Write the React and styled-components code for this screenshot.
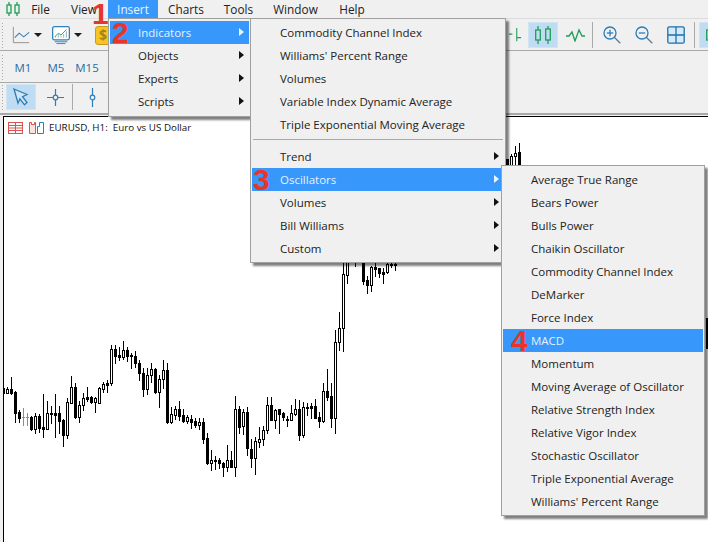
import React from "react";
import styled, { createGlobalStyle } from "styled-components";

const GlobalStyle = createGlobalStyle`
  html, body {
    margin: 0;
    padding: 0;
    height: 100%;
    overflow: hidden;
    background: #f0f0f0;
  }
`;

const GREEN = "#1f9d55";
const BLUE = "#2f7fb8";
const HIGHLIGHT = "#3797fb";

// hi, lo, body top, body bottom, kind (f = filled, h = hollow, g = grey doji)
const candles = [
  [3, 387, 393, 388, 393, "f"], [7, 387, 393, 389, 393, "h"], [11, 377, 394, 389, 393, "f"],
  [15, 391, 422, 392, 413, "f"], [19, 410, 422, 412, 418, "f"], [23, 408, 425, 417, 418, "g"],
  [27, 413, 425, 417, 418, "g"], [31, 416, 430, 417, 429, "f"], [35, 413, 433, 416, 429, "h"],
  [39, 414, 432, 416, 428, "f"], [43, 394, 437, 427, 429, "f"], [47, 401, 429, 413, 429, "h"],
  [51, 406, 423, 413, 414, "f"], [55, 394, 437, 413, 415, "f"], [59, 406, 433, 413, 421, "f"],
  [63, 419, 446, 420, 435, "f"], [67, 398, 438, 402, 435, "h"], [71, 376, 403, 387, 403, "h"],
  [75, 383, 418, 387, 417, "f"], [79, 401, 422, 405, 417, "h"], [83, 393, 410, 398, 405, "h"],
  [87, 387, 401, 397, 399, "f"], [91, 396, 403, 397, 402, "f"], [95, 397, 412, 398, 402, "h"],
  [99, 387, 403, 388, 403, "h"], [103, 382, 392, 384, 389, "h"], [107, 380, 392, 383, 385, "f"],
  [111, 345, 385, 349, 383, "h"], [115, 345, 363, 349, 356, "f"], [119, 347, 360, 355, 357, "f"],
  [123, 341, 359, 350, 357, "h"], [127, 347, 361, 350, 356, "f"], [131, 353, 368, 355, 356, "f"],
  [135, 351, 367, 356, 363, "f"], [139, 360, 380, 363, 373, "f"], [143, 368, 396, 373, 389, "f"],
  [147, 368, 394, 375, 389, "h"], [151, 363, 382, 369, 375, "h"], [155, 368, 393, 369, 392, "f"],
  [159, 375, 407, 379, 392, "h"], [163, 360, 388, 370, 379, "h"], [167, 363, 423, 370, 422, "f"],
  [171, 407, 423, 414, 422, "h"], [175, 406, 419, 409, 415, "h"], [179, 401, 420, 409, 416, "f"],
  [183, 409, 422, 415, 421, "f"], [187, 415, 423, 417, 421, "h"], [191, 415, 428, 419, 422, "f"],
  [195, 418, 427, 421, 425, "f"], [199, 418, 429, 422, 425, "h"], [203, 418, 443, 422, 439, "f"],
  [207, 433, 464, 438, 463, "f"], [211, 450, 470, 460, 463, "h"], [215, 456, 469, 460, 461, "f"],
  [219, 458, 468, 460, 463, "f"], [223, 462, 476, 463, 467, "f"], [227, 445, 471, 460, 467, "h"],
  [231, 451, 467, 460, 467, "f"], [235, 396, 476, 409, 467, "h"], [239, 406, 433, 409, 427, "f"],
  [243, 409, 434, 412, 426, "h"], [247, 407, 455, 412, 448, "f"], [251, 439, 467, 449, 458, "f"],
  [255, 437, 474, 441, 458, "h"], [259, 427, 447, 439, 442, "h"], [263, 426, 445, 430, 439, "h"],
  [267, 397, 433, 405, 430, "h"], [271, 397, 420, 405, 420, "f"], [275, 409, 428, 410, 420, "h"],
  [279, 409, 433, 409, 414, "f"], [283, 412, 420, 413, 417, "f"], [287, 416, 426, 419, 420, "f"],
  [291, 405, 420, 413, 420, "h"], [295, 399, 415, 409, 414, "h"], [299, 400, 440, 409, 435, "f"],
  [303, 402, 437, 407, 435, "h"], [307, 403, 415, 407, 408, "f"], [311, 403, 418, 406, 408, "f"],
  [315, 399, 418, 406, 418, "f"], [319, 412, 427, 417, 421, "f"], [323, 383, 422, 391, 421, "h"],
  [327, 369, 400, 391, 397, "f"], [331, 383, 427, 396, 418, "f"], [335, 330, 433, 342, 418, "h"],
  [339, 312, 350, 328, 342, "h"], [343, 255, 351, 274, 328, "h"], [347, 255, 283, 255, 275, "h"],
  [355, 250, 266, 258, 260, "f"], [363, 250, 284, 255, 281, "f"], [367, 276, 293, 280, 285, "f"],
  [371, 266, 291, 267, 285, "h"], [375, 255, 276, 267, 269, "f"], [379, 268, 277, 268, 273, "f"],
  [383, 268, 283, 272, 274, "f"], [387, 255, 273, 264, 272, "h"], [391, 255, 267, 264, 265, "f"],
  [395, 255, 270, 264, 265, "f"], [507, 159, 170, 159, 170, "f"], [511, 154, 170, 156, 170, "h"],
  [515, 146, 170, 153, 156, "h"], [519, 143, 170, 152, 170, "f"], [707, 318, 348, 318, 348, "f"],
];

const indicatorsTop = [
  "Commodity Channel Index",
  "Williams' Percent Range",
  "Volumes",
  "Variable Index Dynamic Average",
  "Triple Exponential Moving Average",
];

const indicatorGroups = ["Trend", "Oscillators", "Volumes", "Bill Williams", "Custom"];

const oscillators = [
  "Average True Range",
  "Bears Power",
  "Bulls Power",
  "Chaikin Oscillator",
  "Commodity Channel Index",
  "DeMarker",
  "Force Index",
  "MACD",
  "Momentum",
  "Moving Average of Oscillator",
  "Relative Strength Index",
  "Relative Vigor Index",
  "Stochastic Oscillator",
  "Triple Exponential Average",
  "Williams' Percent Range",
];

const Page = styled.div`
  position: relative;
  width: 708px;
  height: 542px;
  overflow: hidden;
  display: flex;
  flex-direction: column;
  background: #f0f0f0;
  font-family: "Open Sans", "Noto Sans", sans-serif;
  font-size: 11.5px;
  color: #222;
`;

const MenuBar = styled.div`
  display: flex;
  align-items: stretch;
  height: 18px;
  padding-left: 4px;
  border-bottom: 1px solid #dcdcdc;
  font-size: 11.8px;
`;

const BarItem = styled.div`
  display: flex;
  align-items: center;
  width: ${(p) => p.$w}px;
  justify-content: center;
  background: ${(p) => (p.$active ? HIGHLIGHT : "transparent")};
  color: ${(p) => (p.$active ? "#eaf4ff" : "#222")};
`;

const ToolRow = styled.div`
  display: flex;
  align-items: center;
  height: 32px;
  overflow: hidden;
  border-bottom: 1px solid ${(p) => (p.$line ? "#a9a9a9" : "transparent")};
  width: ${(p) => p.$width || 708}px;
  padding: 1px 0 0 1px;
  box-sizing: border-box;
`;

const BottomRow = styled(ToolRow)`
  height: 30px;
  padding: 0 0 2px 1px;
  border-bottom: 0;
`;

const Grip = styled.div`
  width: 3px;
  height: 26px;
  margin-right: ${(p) => p.$mr}px;
  flex-shrink: 0;
  background-image: radial-gradient(circle, #a8a8a8 0.8px, transparent 1px);
  background-size: 3px 3px;
`;

const Tool = styled.div`
  display: flex;
  align-items: center;
  justify-content: center;
  flex-shrink: 0;
  box-sizing: border-box;
  width: ${(p) => p.$w}px;
  height: 26px;
  margin-left: ${(p) => p.$ml || 0}px;
  background: ${(p) => (p.$active ? "#bfdcf3" : "transparent")};
  border: 1px solid ${(p) => (p.$active ? "#cfe4f5" : "transparent")};
`;

const Caret = styled.div`
  width: 14px;
  flex-shrink: 0;
  display: flex;
  justify-content: center;

  &::before {
    content: "";
    border-left: 4px solid transparent;
    border-right: 4px solid transparent;
    border-top: 4px solid #1c1c1c;
  }
`;

const Dollar = styled.div`
  width: 16px;
  height: 19px;
  margin-left: ${(p) => p.$ml}px;
  flex-shrink: 0;
  box-sizing: border-box;
  border: 1px solid #c79a1c;
  border-radius: 3px;
  background: #f6c523;
  color: #a3831c;
  font-weight: 700;
  font-size: 14px;
  line-height: 16px;
  text-align: center;
`;

const RightTools = styled.div`
  display: flex;
  align-items: center;
  margin-left: auto;
  margin-right: -21px;
`;

const ToolSep = styled.div`
  width: 1px;
  height: 26px;
  flex-shrink: 0;
  margin-left: ${(p) => p.$ml || 0}px;
  margin-right: ${(p) => p.$mr || 0}px;
  background: #a9a9a9;
`;

const Timeframe = styled.div`
  width: ${(p) => p.$w}px;
  margin-left: ${(p) => p.$ml}px;
  flex-shrink: 0;
  text-align: center;
  color: #2a6ca3;
`;

const ChartPanel = styled.div`
  position: relative;
  flex: 1;
  min-height: 0;
  border-top: 2px solid #a9a9a9;
  background: #f0f0f0;
`;

const ChartFrame = styled.div`
  position: absolute;
  inset: 1px 0 0 3px;
  border-top: 1px solid #000;
  border-left: 1px solid #000;
  background: #fff;
  overflow: hidden;
`;

const ChartSvg = styled.svg`
  display: block;
  width: 704px;
  height: 425px;
`;

const Legend = styled.div`
  position: absolute;
  top: 4px;
  left: 4px;
  display: flex;
  align-items: center;
  gap: 6px;
  font-size: 9.8px;
  line-height: 14px;
  color: #111;
  white-space: pre;
`;

const LegendTitle = styled.span`
  margin-left: -1px;
`;

const Menu = styled.div`
  position: absolute;
  top: ${(p) => p.$top}px;
  left: ${(p) => p.$left}px;
  width: ${(p) => p.$w}px;
  box-sizing: border-box;
  padding: 2px 1px;
  background: #f0f0f0;
  border: 1px solid #a0a0a0;
  box-shadow: 3px 3px 2px rgba(0, 0, 0, 0.5);
`;

const InsertMenu = styled(Menu)`
  padding-bottom: 3px;
`;

const Item = styled.div`
  position: relative;
  height: 23px;
  line-height: 23px;
  padding-left: 28px;
  white-space: nowrap;
  background: ${(p) => (p.$active ? HIGHLIGHT : "transparent")};
  color: ${(p) => (p.$active ? "#e6f2ff" : "#222")};

  ${(p) =>
    p.$sub &&
    `
    &::after {
      content: "";
      position: absolute;
      right: 5px;
      top: 7px;
      border-top: 4px solid transparent;
      border-bottom: 4px solid transparent;
      border-left: 5px solid ${p.$active ? "#eaf4ff" : "#111"};
    }
  `}
`;

const Separator = styled.div`
  height: 1px;
  margin: 3px 1px 5px;
  background: #a8a8a8;
`;

const Step = styled.span`
  position: absolute;
  left: ${(p) => p.$left}px;
  top: ${(p) => p.$top}px;
  font-family: "Liberation Sans", Arial, sans-serif;
  font-weight: 700;
  font-size: 30px;
  line-height: 23px;
  color: #e8352a;
`;

const Logo = () => (
  <svg width="16" height="16" viewBox="0 0 16 16" fill="none" stroke={GREEN} strokeWidth="1.3">
    <path d="M4 1v3M4 12v3M12 1v3M12 12v3" />
    <rect x="2" y="4" width="4" height="8" />
    <rect x="10" y="4" width="4" height="8" fill="#f0f0f0" />
  </svg>
);

const LineChartIcon = () => (
  <svg width="20" height="20" viewBox="0 0 20 20" fill="none">
    <path d="M1.5 1v17.5H19" stroke="#8a8a8a" />
    <path d="M3 13l5-5 5 4 6-5" stroke="#3b7fb0" strokeWidth="1.2" />
  </svg>
);

const ChartWindowIcon = () => (
  <svg width="20" height="20" viewBox="0 0 20 20" fill="none">
    <rect x="0.7" y="0.7" width="18.6" height="14.6" rx="2" stroke={BLUE} strokeWidth="1.4" fill="#fff" />
    <path d="M3 12l4-4 3 2 6-6" stroke={GREEN} />
    <path d="M4 13V11M7 13V9M10 13V11M13 13V9M16 13V6" stroke="#8aa9bd" />
    <path d="M3 17.5h14M5 19.5h10" stroke={BLUE} />
  </svg>
);

const BarIcon = () => (
  <svg width="16" height="20" viewBox="0 0 16 20" fill="none" stroke={GREEN} strokeWidth="1.2">
    <path d="M1 9h4M10 2v15M10 13h5" />
  </svg>
);

const CandlesIcon = () => (
  <svg width="18" height="20" viewBox="0 0 18 20" fill="none" stroke={GREEN} strokeWidth="1.3">
    <path d="M4 1v4M4 15v4M14 1v3M14 15v4" />
    <rect x="1.7" y="5" width="4.6" height="10" />
    <rect x="11.7" y="4" width="4.6" height="11" />
  </svg>
);

const ZigzagIcon = () => (
  <svg width="19" height="14" viewBox="0 0 19 14" fill="none" stroke={GREEN} strokeWidth="1.3">
    <path d="M0 8h3l3-4 3 9 4-11 3 6h3" />
  </svg>
);

const ZoomIcon = ({ plus, size = 18 }) => (
  <svg width={size} height={size} viewBox="0 0 18 18" fill="none" stroke="#2b7db8" strokeWidth="1.3">
    <circle cx="7" cy="7" r="6" />
    <path d="M3.8 7h6.4" />
    {plus && <path d="M7 3.8v6.4" />}
    <path d="M11.3 11.3l6 6" stroke="#5a7d96" />
  </svg>
);

const GridIcon = () => (
  <svg width="18" height="18" viewBox="0 0 18 18" fill="#d5ebfb" stroke="#1f6fa8" strokeWidth="1.3">
    <rect x="0.8" y="0.8" width="16.4" height="16.4" rx="1.5" />
    <path d="M9 1v16M1 9h16" />
  </svg>
);

const CursorIcon = () => (
  <svg width="16" height="18" viewBox="0 0 16 18" fill="#cfe6f7" stroke="#2d7db8" strokeWidth="1.3">
    <path d="M1 1l13 5.5-4.5 2.2 4.5 5.8-2.5 2.3-4.6-6L5 15z" />
  </svg>
);

const CrossIcon = () => (
  <svg width="17" height="17" viewBox="0 0 17 17" fill="none" stroke="#2d7db8" strokeWidth="1.2">
    <circle cx="8.5" cy="8.5" r="2.3" />
    <path d="M8.5 0v6M8.5 11v6M0 8.5h6M11 8.5h6" />
  </svg>
);

const VLineIcon = () => (
  <svg width="7" height="19" viewBox="0 0 7 19" fill="none" stroke="#2d7db8" strokeWidth="1.2">
    <circle cx="3.5" cy="9.5" r="2.3" />
    <path d="M3.5 0v7M3.5 12v7" />
  </svg>
);

const TableIcon = () => (
  <svg width="15" height="12" viewBox="0 0 15 12" fill="none" stroke="#d9534f" strokeWidth="1">
    <rect x="0.5" y="0.5" width="14" height="11" />
    <path d="M1 3.5h13M1 6h13M1 8.5h13M7.5 1v10" />
  </svg>
);

const TemplateIcon = () => (
  <svg width="15" height="12" viewBox="0 0 15 12" fill="none" strokeWidth="1">
    <path d="M0.5 0.5h2v2h3v-2h1v11h-6z" stroke="#d9534f" fill="#fbe3e2" />
    <path d="M8.5 4.5h2v-4h4v11h-6z" stroke="#2f7fb8" />
  </svg>
);

const Candles = () => (
  <ChartSvg viewBox="4 117 704 425" shapeRendering="crispEdges">
    {candles.map(([x, hi, lo, top, bottom, kind]) => {
      const ink = kind === "g" ? "#8c8c8c" : "#000";
      return (
        <g key={x}>
          <rect x={x} y={hi} width="1" height={lo - hi + 1} fill={ink} />
          {kind === "g" ? (
            <rect x={x - 1} y={top} width="3" height="1" fill={ink} />
          ) : (
            <rect x={x - 1} y={top} width="3" height={bottom - top + 1} fill={ink} />
          )}
          {kind === "h" && bottom - top > 1 && (
            <rect x={x} y={top + 1} width="1" height={bottom - top - 1} fill="#fff" />
          )}
        </g>
      );
    })}
  </ChartSvg>
);

export default function App() {
  return (
    <>
      <GlobalStyle />
      <Page>
        <MenuBar>
          <BarItem $w={17}>
            <Logo />
          </BarItem>
          <BarItem $w={39}>File</BarItem>
          <BarItem $w={48}>View</BarItem>
          <BarItem $w={50} $active>
            Insert
          </BarItem>
          <BarItem $w={56}>Charts</BarItem>
          <BarItem $w={49}>Tools</BarItem>
          <BarItem $w={65}>Window</BarItem>
          <BarItem $w={48}>Help</BarItem>
        </MenuBar>

        <ToolRow $line>
          <Grip $mr={7} />
          <Tool $w={20}>
            <LineChartIcon />
          </Tool>
          <Caret />
          <Tool $w={20} $ml={6}>
            <ChartWindowIcon />
          </Tool>
          <Caret />
          <Dollar $ml={10}>$</Dollar>
          <RightTools>
            <Tool $w={16}>
              <BarIcon />
            </Tool>
            <Tool $w={30} $ml={5} $active>
              <CandlesIcon />
            </Tool>
            <Tool $w={34}>
              <ZigzagIcon />
            </Tool>
            <ToolSep />
            <Tool $w={32} $ml={3}>
              <ZoomIcon plus />
            </Tool>
            <Tool $w={32}>
              <ZoomIcon />
            </Tool>
            <Tool $w={32}>
              <GridIcon />
            </Tool>
            <ToolSep $ml={2} $mr={4} />
            <Tool $w={30} $active>
              <CandlesIcon />
            </Tool>
          </RightTools>
        </ToolRow>

        <ToolRow $line $width={400}>
          <Grip $mr={0} />
          <Timeframe $w={22} $ml={8}>
            M1
          </Timeframe>
          <Timeframe $w={22} $ml={11}>
            M5
          </Timeframe>
          <Timeframe $w={28} $ml={6}>
            M15
          </Timeframe>
        </ToolRow>

        <BottomRow>
          <Grip $mr={2} />
          <Tool $w={30} $active>
            <CursorIcon />
          </Tool>
          <Tool $w={26} $ml={6}>
            <CrossIcon />
          </Tool>
          <ToolSep $ml={4} />
          <Tool $w={26} $ml={6}>
            <VLineIcon />
          </Tool>
        </BottomRow>

        <ChartPanel>
          <ChartFrame>
            <Candles />
            <Legend>
              <TableIcon />
              <TemplateIcon />
              <LegendTitle>EURUSD, H1:  Euro vs US Dollar</LegendTitle>
            </Legend>
          </ChartFrame>
        </ChartPanel>

        <Step $left={92} $top={2}>
          1
        </Step>

        <InsertMenu $top={18} $left={108} $w={143}>
          <Item $active $sub>
            Indicators
            <Step $left={2} $top={0}>
              2
            </Step>
          </Item>
          <Item $sub>Objects</Item>
          <Item $sub>Experts</Item>
          <Item $sub>Scripts</Item>
        </InsertMenu>

        <Menu $top={18} $left={250} $w={256}>
          {indicatorsTop.map((name) => (
            <Item key={name}>{name}</Item>
          ))}
          <Separator />
          {indicatorGroups.map((name) => (
            <Item key={name} $sub $active={name === "Oscillators"}>
              {name}
              {name === "Oscillators" && (
                <Step $left={1} $top={0}>
                  3
                </Step>
              )}
            </Item>
          ))}
        </Menu>

        <Menu $top={165} $left={501} $w={204}>
          {oscillators.map((name) => (
            <Item key={name} $active={name === "MACD"}>
              {name}
              {name === "MACD" && (
                <Step $left={8} $top={0}>
                  4
                </Step>
              )}
            </Item>
          ))}
        </Menu>
      </Page>
    </>
  );
}
